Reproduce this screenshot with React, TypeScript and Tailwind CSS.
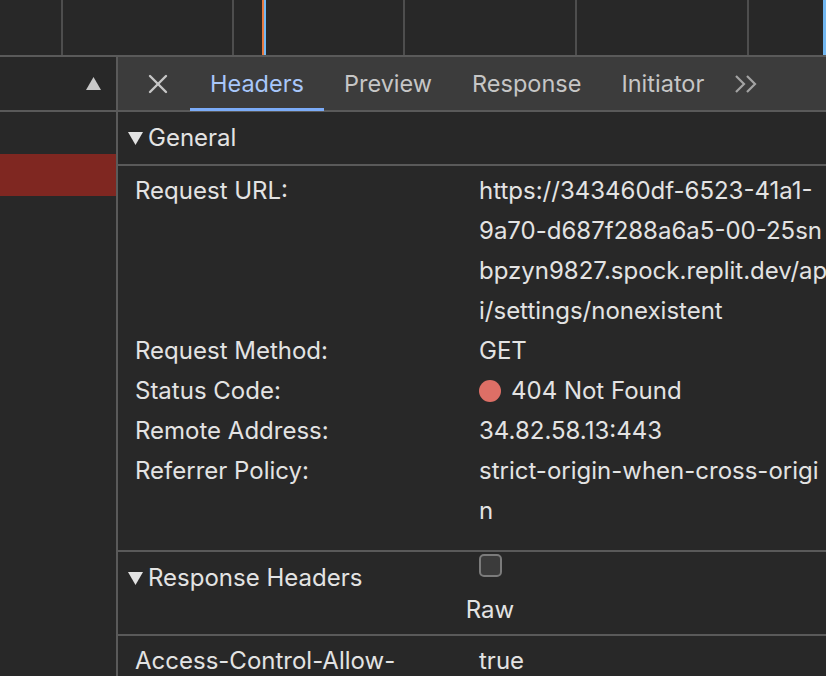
import React from 'react'

const font = { fontFamily: 'Inter, "Noto Sans", sans-serif' }

const Tri = ({ up = false, className = '' }: { up?: boolean; className?: string }) => (
    <svg width="15" height="13" viewBox="0 0 15 13" className={className}>
        {up ? <polygon points="7.5,0 15,13 0,13" fill="currentColor" /> : <polygon points="0,0 15,0 7.5,13" fill="currentColor" />}
    </svg>
)

const Row = ({ label, children }: { label: string; children: React.ReactNode }) => (
    <div className="flex">
        <div className="w-[361px] shrink-0 pl-[17px]">{label}</div>
        <div className="flex-1 whitespace-nowrap">{children}</div>
    </div>
)

export default function App() {
    const gridLines = [61, 232, 403, 575, 747]

    return (
        <div style={font} className="w-[826px] h-[676px] overflow-hidden bg-[#282828] text-[#e3e3e3] text-[24px] leading-[40px] flex flex-col">
            {/* overview timeline */}
            <div className="relative h-[57px] shrink-0 border-b-2 border-[#5a5a5a]">
                {gridLines.map((x) => (
                    <div key={x} className="absolute top-0 bottom-0 w-[2px] bg-[#4e4e4e]" style={{ left: x }} />
                ))}
                <div className="absolute top-0 bottom-0 left-[262px] w-[2px] bg-[#e5793f]" />
                <div className="absolute top-0 bottom-0 left-[264px] w-[2px] bg-[#72b8f2]" />
                <div className="absolute top-0 bottom-0 left-[823px] w-[3px] bg-[#72b8f2]" />
            </div>

            <div className="flex flex-1 min-h-0">
                {/* request list */}
                <div className="w-[118px] shrink-0 border-r-2 border-[#5a5a5a] flex flex-col">
                    <div className="h-[55px] border-b-2 border-[#5a5a5a] flex items-center justify-end pr-[15px] text-[#c8c8c8]">
                        <Tri up />
                    </div>
                    <div className="h-[42px]" />
                    <div className="h-[42px] bg-[#7f2721]" />
                </div>

                {/* details */}
                <div className="flex-1 flex flex-col min-w-0">
                    <div className="h-[55px] shrink-0 bg-[#3c3c3c] border-b-2 border-[#5a5a5a] flex items-stretch text-[#c6c6c6] text-[23.5px]">
                        <div className="w-[72px] flex items-center pl-[30px]">
                            <svg width="20" height="20" viewBox="0 0 20 20" stroke="currentColor" strokeWidth="2.4" strokeLinecap="round">
                                <line x1="2" y1="2" x2="18" y2="18" />
                                <line x1="18" y1="2" x2="2" y2="18" />
                            </svg>
                        </div>
                        <div className="relative px-5 flex items-center text-[#a8c7fa]">
                            Headers
                            <div className="absolute left-0 right-0 bottom-[-1px] h-[3px] bg-[#7cacf8]" />
                        </div>
                        <div className="px-5 flex items-center">Preview</div>
                        <div className="px-5 flex items-center">Response</div>
                        <div className="px-5 flex items-center">Initiator</div>
                        <div className="pl-[10px] flex items-center text-[#a3a3a3]">
                            <svg width="24" height="20" viewBox="0 0 24 20" fill="none" stroke="currentColor" strokeWidth="2.2">
                                <polyline points="2,2 10,10 2,18" />
                                <polyline points="13,2 21,10 13,18" />
                            </svg>
                        </div>
                    </div>

                    <div className="flex-1 overflow-hidden">
                        {/* General */}
                        <div className="h-[54px] border-b-2 border-[#5a5a5a] flex items-center pl-[10px] gap-[5px]">
                            <Tri />
                            <span>General</span>
                        </div>
                        <div className="pt-[5px] pb-[19px] border-b-2 border-[#5a5a5a]">
                            <Row label="Request URL:">
                                <div>https://343460df-6523-41a1-</div>
                                <div>9a70-d687f288a6a5-00-25sn</div>
                                <div>bpzyn9827.spock.replit.dev/ap</div>
                                <div>i/settings/nonexistent</div>
                            </Row>
                            <Row label="Request Method:">GET</Row>
                            <Row label="Status Code:">
                                <div className="flex items-center gap-[10px]">
                                    <span className="w-[22px] h-[22px] rounded-full bg-[#dd6f66]" />
                                    <span>404 Not Found</span>
                                </div>
                            </Row>
                            <Row label="Remote Address:">34.82.58.13:443</Row>
                            <Row label="Referrer Policy:">
                                <div>strict-origin-when-cross-origi</div>
                                <div>n</div>
                            </Row>
                        </div>

                        {/* Response Headers */}
                        <div className="h-[84px] border-b-2 border-[#5a5a5a] flex">
                            <div className="w-[340px] flex items-start pt-[6px] pl-[10px] gap-[5px]">
                                <div className="flex items-center gap-[5px]">
                                    <Tri />
                                    <span>Response Headers</span>
                                </div>
                            </div>
                            <div className="w-[64px] flex flex-col items-center pt-[2px]">
                                <div className="w-[23px] h-[23px] rounded-[5px] border-2 border-[#7b7b7b] bg-[#3b3b3b]" />
                                <div className="mt-[13px]">Raw</div>
                            </div>
                        </div>
                        <div className="pt-[5px]">
                            <Row label="Access-Control-Allow-">true</Row>
                        </div>
                    </div>
                </div>
            </div>
        </div>
    )
}
